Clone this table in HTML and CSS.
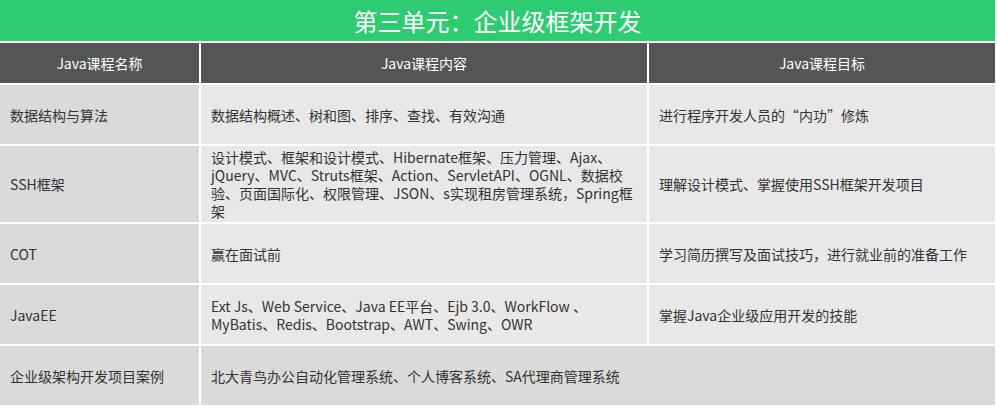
FILE: index.html
```html
<!DOCTYPE html>
<html lang="zh-CN">
<head>
  <meta charset="UTF-8">
  <title>第三单元：企业级框架开发</title>
  <link rel="stylesheet" href="styles.css">
</head>
<body>
  <div class="unit">
    <h2 class="unit-title">第三单元：企业级框架开发</h2>
    <table class="course-table">
      <thead>
        <tr>
          <th class="col-name">Java课程名称</th>
          <th class="col-content">Java课程内容</th>
          <th class="col-goal">Java课程目标</th>
        </tr>
      </thead>
      <tbody>
        <tr>
          <td class="name">数据结构与算法</td>
          <td>数据结构概述、树和图、排序、查找、有效沟通</td>
          <td>进行程序开发人员的<span class="cjk">“内功”</span>修炼</td>
        </tr>
        <tr class="tall">
          <td class="name">SSH框架</td>
          <td>设计模式、框架和设计模式、Hibernate框架、压力管理、Ajax、jQuery、MVC、Struts框架、Action、ServletAPI、OGNL、数据校验、页面国际化、权限管理、JSON、s实现租房管理系统，Spring框架</td>
          <td>理解设计模式、掌握使用SSH框架开发项目</td>
        </tr>
        <tr>
          <td class="name">COT</td>
          <td>赢在面试前</td>
          <td>学习简历撰写及面试技巧，进行就业前的准备工作</td>
        </tr>
        <tr>
          <td class="name">JavaEE</td>
          <td>Ext Js、Web Service、Java EE平台、Ejb 3.0、WorkFlow 、MyBatis、Redis、Bootstrap、AWT、Swing、OWR</td>
          <td>掌握Java企业级应用开发的技能</td>
        </tr>
        <tr>
          <td class="name">企业级架构开发项目案例</td>
          <td class="merged" colspan="2">北大青鸟办公自动化管理系统、个人博客系统、SA代理商管理系统</td>
        </tr>
      </tbody>
    </table>
  </div>
</body>
</html>
```

FILE: styles.css
```css
body {
  margin: 0;
  padding: 0;
  background-color: #fff;
  font-family: "Noto Sans CJK SC", sans-serif;
  color: #333;
}
.unit {
  width: 997px;
  overflow: hidden;
}
.unit-title {
  margin: 0;
  width: 995px;
  height: 41px;
  line-height: 41px;
  background-color: #2ecc71;
  color: #fff;
  font-size: 24px;
  font-weight: normal;
  text-align: center;
}
.course-table {
  width: 999px;
  margin-left: -2px;
  border-collapse: separate;
  border-spacing: 2px;
  table-layout: fixed;
  font-size: 14px;
}
.course-table th {
  height: 40px;
  padding: 0;
  background-color: #555;
  color: #fff;
  font-weight: normal;
  font-size: 14px;
}
.col-name {
  width: 199px;
}
.col-content {
  width: 446px;
}
.col-goal {
  width: 346px;
}
.course-table td {
  height: 59px;
  padding: 0 14px 0 10px;
  background-color: #e9e8e8;
  line-height: 18px;
  vertical-align: middle;
}
.course-table tr.tall td {
  height: 76px;
}
.course-table td.name,
.course-table td.merged {
  background-color: #dadada;
}
.cjk {
  font-family: "Noto Sans CJK SC", sans-serif;
}
```
